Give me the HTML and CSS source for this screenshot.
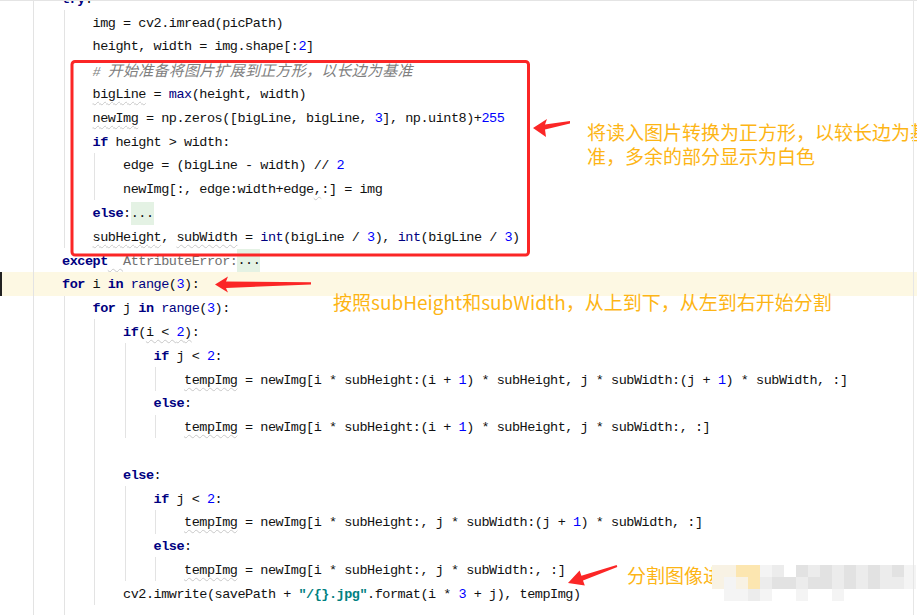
FILE: index.html
```html
<!DOCTYPE html>
<html lang="zh">
<head>
<meta charset="utf-8">
<title>code</title>
<link rel="stylesheet" href="styles.css">
</head>
<body>
<div class="editor">
  <div class="code">
    <div class="ln"><i class="g"></i><span class="c"><span class="kw">try</span>:</span></div>
    <div class="ln"><i class="g"></i><i class="g"></i><span class="c">img = cv2.imread(picPath)</span></div>
    <div class="ln"><i class="g"></i><i class="g"></i><span class="c">height, width = img.shape[:<span class="num">2</span>]</span></div>
    <div class="ln"><i class="g"></i><i class="g"></i><span class="c cm"># <span class="cjk">开始准备将图片扩展到正方形，以长边为基准</span></span></div>
    <div class="ln"><i class="g"></i><i class="g"></i><span class="c"><span class="wv">bigLine</span> = <span class="bi">max</span>(height, width)</span></div>
    <div class="ln"><i class="g"></i><i class="g"></i><span class="c"><span class="wv">newImg</span> = np.zeros([bigLine, bigLine, <span class="num">3</span>], np.uint8)+<span class="num">255</span></span></div>
    <div class="ln"><i class="g"></i><i class="g"></i><span class="c"><span class="kw">if</span> height &gt; width:</span></div>
    <div class="ln"><i class="g"></i><i class="g"></i><i class="g"></i><span class="c">edge = (bigLine - width) // <span class="num">2</span></span></div>
    <div class="ln"><i class="g"></i><i class="g"></i><i class="g"></i><span class="c">newImg[:, edge:width+edge<span class="wv">,</span>:] = img</span></div>
    <div class="ln"><i class="g"></i><i class="g"></i><span class="c"><span class="kw">else</span>:<span class="fold">...</span></span></div>
    <div class="ln"><i class="g"></i><i class="g"></i><span class="c"><span class="wv">subHeight</span>, <span class="wv">subWidth</span> = <span class="bi">int</span>(bigLine / <span class="num">3</span>), <span class="bi">int</span>(bigLine / <span class="num">3</span>)</span></div>
    <div class="ln"><i class="g"></i><span class="c"><span class="kw">except</span><span class="wv">  </span><span class="dim">AttributeError:</span><span class="fold">...</span></span></div>
    <div class="ln cur"><i class="g"></i><span class="c"><span class="kw">for</span> i <span class="kw">in</span> <span class="bi">range</span>(<span class="num">3</span>):</span></div>
    <div class="ln"><i class="g"></i><i class="g"></i><span class="c"><span class="kw">for</span> j <span class="kw">in</span> <span class="bi">range</span>(<span class="num">3</span>):</span></div>
    <div class="ln"><i class="g"></i><i class="g"></i><i class="g"></i><span class="c"><span class="kw">if</span>(<span class="wv">i &lt; <span class="num">2</span>)</span>:</span></div>
    <div class="ln"><i class="g"></i><i class="g"></i><i class="g"></i><i class="g"></i><span class="c"><span class="kw">if</span> j &lt; <span class="num">2</span>:</span></div>
    <div class="ln"><i class="g"></i><i class="g"></i><i class="g"></i><i class="g"></i><i class="g"></i><span class="c"><span class="wv">tempImg</span> = newImg[i * subHeight:(i + <span class="num">1</span>) * subHeight, j * subWidth:(j + <span class="num">1</span>) * subWidth, :]</span></div>
    <div class="ln"><i class="g"></i><i class="g"></i><i class="g"></i><i class="g"></i><span class="c"><span class="kw">else</span>:</span></div>
    <div class="ln"><i class="g"></i><i class="g"></i><i class="g"></i><i class="g"></i><i class="g"></i><span class="c"><span class="wv">tempImg</span> = newImg[i * subHeight:(i + <span class="num">1</span>) * subHeight, j * subWidth:, :]</span></div>
    <div class="ln"><i class="g"></i><i class="g"></i><i class="g"></i><span class="c"> </span></div>
    <div class="ln"><i class="g"></i><i class="g"></i><i class="g"></i><span class="c"><span class="kw">else</span>:</span></div>
    <div class="ln"><i class="g"></i><i class="g"></i><i class="g"></i><i class="g"></i><span class="c"><span class="kw">if</span> j &lt; <span class="num">2</span>:</span></div>
    <div class="ln"><i class="g"></i><i class="g"></i><i class="g"></i><i class="g"></i><i class="g"></i><span class="c"><span class="wv">tempImg</span> = newImg[i * subHeight:, j * subWidth:(j + <span class="num">1</span>) * subWidth, :]</span></div>
    <div class="ln"><i class="g"></i><i class="g"></i><i class="g"></i><i class="g"></i><span class="c"><span class="kw">else</span>:</span></div>
    <div class="ln"><i class="g"></i><i class="g"></i><i class="g"></i><i class="g"></i><i class="g"></i><span class="c"><span class="wv">tempImg</span> = newImg[i * subHeight:, j * subWidth:, :]</span></div>
    <div class="ln"><i class="g"></i><i class="g"></i><i class="g"></i><span class="c">cv2.imwrite(savePath + <span class="str">"/{}.jpg"</span>.format(i * <span class="num">3</span> + j), tempImg)</span></div>
    <div class="ln"><i class="g"></i><i class="g"></i><span class="c"> </span></div>
  </div>

  <div class="note n1">将读入图片转换为正方形，以较长边为基<br>准，多余的部分显示为白色</div>
  <div class="note n2">按照subHeight和subWidth，从上到下，从左到右开始分割</div>
  <div class="note n3">分割图像进行保存</div>

  <div class="mosaic">
    <i class="a"></i><i class="a"></i><i class="b"></i><i class="b"></i><i class="e"></i><i class="c"></i><i></i><i class="d"></i><i class="c"></i><i class="d"></i><i class="c"></i><i class="d"></i><i class="c"></i><i class="d"></i><i class="c"></i><i class="d"></i><i class="e"></i>
    <i class="a"></i><i class="e"></i><i class="a"></i><i class="b"></i><i class="c"></i><i class="d"></i><i class="d"></i><i class="c"></i><i class="d"></i><i class="d"></i><i class="c"></i><i class="d"></i><i class="c"></i><i class="d"></i><i class="c"></i><i class="c"></i><i class="e"></i>
    <i></i><i class="e"></i><i class="e"></i><i class="c"></i><i class="e"></i><i></i><i></i><i class="e"></i><i></i><i></i><i class="e"></i><i></i><i></i><i></i><i></i><i></i><i></i>
  </div>

  <svg class="marks" width="917" height="615" viewBox="0 0 917 615" aria-hidden="true">
    <rect x="72" y="61.5" width="456.5" height="193.5" rx="3" ry="3" fill="none" stroke="#fb2626" stroke-width="3"/>
    <polygon points="533,128 547,119 545,124.5 570,121 570,123.5 545,129.5 546,137" fill="#fb2626"/>
    <polygon points="215,284.5 228,276.5 226,281.5 311,282.3 311,284.5 226,288 228,292.5" fill="#fb2626"/>
    <polygon points="568,583 579.6,570.5 581.4,575.7 616.7,565.1 617.3,566.9 583,580.5 584.8,585.6" fill="#fb2626"/>
  </svg>
</div>
</body>
</html>
```

FILE: styles.css
```css
html, body {
  margin: 0;
  padding: 0;
  background: #ffffff;
}

.editor {
  position: relative;
  width: 917px;
  height: 615px;
  overflow: hidden;
  background: #ffffff;
  font-family: "Liberation Mono", "Noto Sans CJK SC", monospace;
  font-size: 13.5px;
  letter-spacing: -0.475px;
  color: #111111;
}

.editor::before {
  content: "";
  position: absolute;
  left: 0;
  right: 0;
  top: 0;
  height: 1px;
  background: #e4e4e4;
  z-index: 2;
}

.editor::after {
  content: "";
  position: absolute;
  top: 0;
  bottom: 0;
  left: 913px;
  width: 1px;
  background: #e6e6e6;
  z-index: 2;
}

.code {
  margin-top: -13.7px;
}

.ln {
  position: relative;
  display: flex;
  align-items: center;
  height: 23.8px;
  padding-left: 31.5px;
}

.ln.cur {
  background: #fdf8e3;
}

.ln.cur::before {
  content: "";
  position: absolute;
  left: 0;
  top: 0;
  bottom: 0;
  width: 2px;
  background: #222222;
}

.g {
  flex: 0 0 30.5px;
  align-self: stretch;
  background: linear-gradient(#e3e3e3, #e3e3e3) no-repeat 1.5px 0 / 1px 100%;
}

.c {
  white-space: pre;
  line-height: 23.8px;
  padding-top: 3px;
}

.kw {
  color: #000080;
  font-weight: bold;
}

.bi {
  color: #000080;
}

.num {
  color: #0000ff;
}

.str {
  color: #008080;
  font-weight: bold;
}

.cm {
  color: #808080;
  font-style: italic;
}

.cjk {
  font-family: "Noto Sans CJK SC", sans-serif;
  font-size: 15px;
  letter-spacing: 0.25px;
}

.dim {
  color: #707070;
}

.wv {
  text-decoration: underline wavy #c8c8c8;
  text-decoration-thickness: 1px;
  text-underline-offset: 3px;
}

.fold {
  background: #e4f2e4;
  padding: 4.3px 0;
}

.note {
  position: absolute;
  font-family: "Noto Sans CJK SC", sans-serif;
  font-size: 19px;
  line-height: 24px;
  letter-spacing: 0;
  color: #fdb515;
  white-space: nowrap;
}

.n1 {
  left: 587px;
  top: 120px;
}

.n2 {
  left: 333px;
  top: 290px;
}

.n3 {
  left: 627px;
  top: 563px;
}

.mosaic {
  position: absolute;
  left: 712px;
  top: 565px;
  display: grid;
  grid-template-columns: repeat(17, 12px);
  grid-auto-rows: 12px;
}

.mosaic i {
  display: block;
  background: #ffffff;
}

.mosaic i.a { background: #f8f2e4; }
.mosaic i.b { background: #fce6b0; }
.mosaic i.c { background: #ececec; }
.mosaic i.d { background: #e2e2e2; }
.mosaic i.e { background: #f4f4f4; }

.marks {
  position: absolute;
  left: 0;
  top: 0;
  pointer-events: none;
}
```
